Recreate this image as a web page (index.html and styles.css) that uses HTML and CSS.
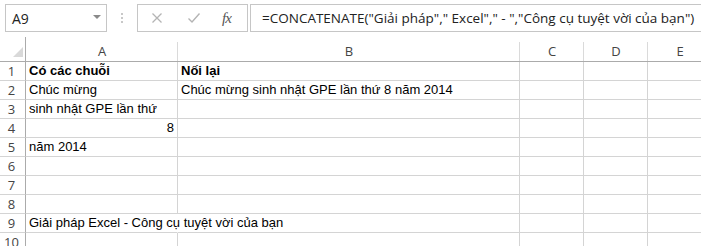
FILE: index.html
```html
<!DOCTYPE html>
<html>
<head>
<meta charset="utf-8">
<link rel="stylesheet" href="styles.css">
</head>
<body>
<div class="toolbar">
  <div class="namebox"><span class="name">A9</span><span class="caret"></span></div>
  <div class="dots"><i></i><i></i><i></i></div>
  <div class="buttons">
    <svg class="ico" width="12" height="12" viewBox="0 0 12 12"><path d="M1.5 1.5 L10.5 10.5 M10.5 1.5 L1.5 10.5" stroke="#b4b4b4" stroke-width="1.3" fill="none"/></svg>
    <svg class="ico chk" width="14" height="12" viewBox="0 0 14 12"><path d="M1.5 6.5 L5 10 L12.5 1.5" stroke="#b4b4b4" stroke-width="1.4" fill="none"/></svg>
    <span class="fx">fx</span>
  </div>
  <div class="formula">=CONCATENATE("Giải pháp"," Excel"," - ","Công cụ tuyệt vời của bạn")</div>
</div>
<div class="sheet">
  <div class="corner"><span class="tri"></span></div>
  <div class="colh">A</div>
  <div class="colh">B</div>
  <div class="colh">C</div>
  <div class="colh">D</div>
  <div class="colh">E</div>

  <div class="rowh">1</div><div class="cell bold">Có các chuỗi</div><div class="cell bold">Nối lại</div><div class="cell"></div><div class="cell"></div><div class="cell"></div>
  <div class="rowh">2</div><div class="cell">Chúc mừng</div><div class="cell">Chúc mừng sinh nhật GPE lần thứ 8 năm 2014</div><div class="cell"></div><div class="cell"></div><div class="cell"></div>
  <div class="rowh">3</div><div class="cell">sinh nhật GPE lần thứ</div><div class="cell"></div><div class="cell"></div><div class="cell"></div><div class="cell"></div>
  <div class="rowh">4</div><div class="cell num">8</div><div class="cell"></div><div class="cell"></div><div class="cell"></div><div class="cell"></div>
  <div class="rowh">5</div><div class="cell">năm 2014</div><div class="cell"></div><div class="cell"></div><div class="cell"></div><div class="cell"></div>
  <div class="rowh">6</div><div class="cell"></div><div class="cell"></div><div class="cell"></div><div class="cell"></div><div class="cell"></div>
  <div class="rowh">7</div><div class="cell"></div><div class="cell"></div><div class="cell"></div><div class="cell"></div><div class="cell"></div>
  <div class="rowh">8</div><div class="cell"></div><div class="cell"></div><div class="cell"></div><div class="cell"></div><div class="cell"></div>
  <div class="rowh">9</div><div class="cell spill">Giải pháp Excel - Công cụ tuyệt vời của bạn</div><div class="cell"></div><div class="cell"></div><div class="cell"></div><div class="cell"></div>
  <div class="rowh">10</div><div class="cell"></div><div class="cell"></div><div class="cell"></div><div class="cell"></div><div class="cell"></div>
</div>
</body>
</html>
```
FILE: styles.css
```css
html, body {
  margin: 0;
  padding: 0;
  background: #fff;
  overflow: hidden;
}
body {
  width: 701px;
  height: 246px;
}
.toolbar {
  display: flex;
  align-items: flex-start;
  padding-top: 4px;
  height: 33px;
  font-family: "Open Sans", "Noto Sans", sans-serif;
}
.namebox {
  flex-shrink: 0;
  margin-left: 5px;
  height: 26px;
  border: 1px solid #c6c6c6;
  display: flex;
  align-items: center;
  justify-content: space-between;
  padding: 0 5px 0 6px;
  box-sizing: content-box;
  width: 89px;
}
.name {
  font-size: 14px;
  color: #222;
}
.caret {
  width: 0;
  height: 0;
  border-left: 4px solid transparent;
  border-right: 4px solid transparent;
  border-top: 4px solid #8a8a8a;
  margin-top: -2px;
}
.dots {
  flex-shrink: 0;
  width: 30px;
  height: 28px;
  display: flex;
  flex-direction: column;
  align-items: center;
  justify-content: center;
  gap: 2px;
}
.dots i {
  display: block;
  width: 2px;
  height: 2px;
  background: #c8c8c8;
}
.buttons {
  flex-shrink: 0;
  height: 26px;
  border: 1px solid #c6c6c6;
  display: flex;
  align-items: center;
  padding-left: 13px;
  box-sizing: content-box;
  width: 96px;
}
.ico { flex-shrink: 0; }
.chk { margin-left: 24px; }
.fx {
  font-family: "Liberation Serif", serif;
  font-style: italic;
  font-size: 15px;
  color: #555;
  margin-left: 21px;
  letter-spacing: -1px;
}
.formula {
  margin-left: 2px;
  flex: 1;
  min-width: 0;
  height: 26px;
  border: 1px solid #c6c6c6;
  border-right: none;
  font-size: 13.5px;
  line-height: 26px;
  padding-left: 11px;
  color: #222;
  white-space: nowrap;
  overflow: hidden;
}
.sheet {
  display: grid;
  grid-template-columns: 26px 152px 342px 64px 64px 64px;
  grid-template-rows: 25px repeat(10, 19px);
}
.corner {
  border-right: 1px solid #ababab;
  border-bottom: 1px solid #ababab;
  position: relative;
}
.tri {
  position: absolute;
  left: 13px;
  top: 10px;
  width: 0;
  height: 0;
  border-left: 10px solid transparent;
  border-bottom: 10px solid #d9d9d9;
}
.colh {
  font-family: "Open Sans", "Noto Sans", sans-serif;
  font-size: 13px;
  color: #444;
  text-align: center;
  border-bottom: 1px solid #ababab;
  position: relative;
  line-height: 28px;
}
.colh::after {
  content: "";
  position: absolute;
  right: 0;
  top: 5px;
  bottom: 0;
  width: 1px;
  background: #dadada;
}
.rowh {
  font-family: "Open Sans", "Noto Sans", sans-serif;
  font-size: 13px;
  color: #444;
  text-align: center;
  line-height: 18px;
  border-right: 1px solid #ababab;
  border-bottom: 1px solid #d4d4d4;
  padding-right: 2px;
}
.cell {
  font-family: "Liberation Sans", Arial, sans-serif;
  font-size: 13px;
  color: #000;
  line-height: 18px;
  border-right: 1px solid #d4d4d4;
  border-bottom: 1px solid #d4d4d4;
  padding-left: 3px;
  white-space: nowrap;
  overflow: visible;
}
.bold { font-weight: bold; }
.num { text-align: right; padding-right: 3px; }
.spill { border-right-color: transparent; }
```
